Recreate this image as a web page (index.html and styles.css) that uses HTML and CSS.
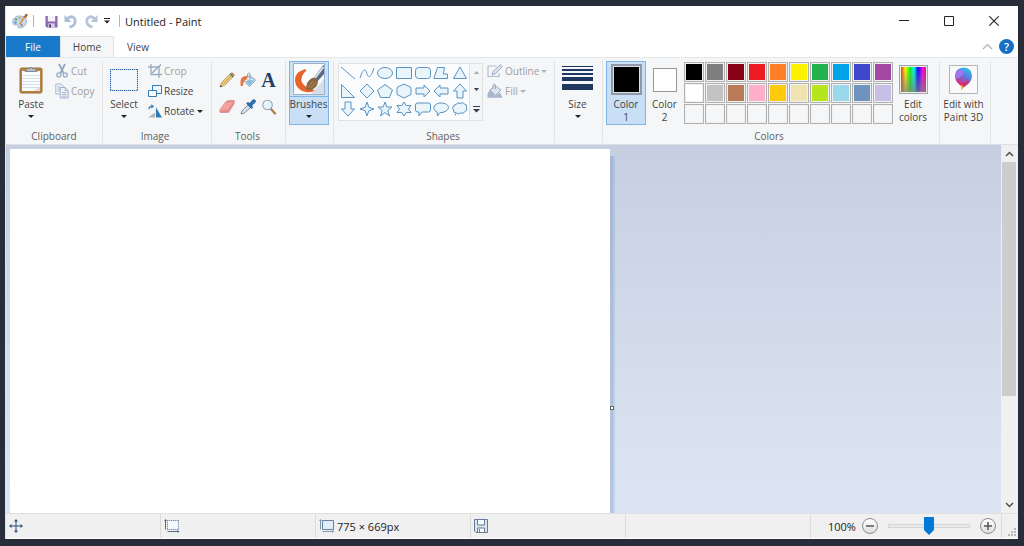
FILE: index.html
```html
<!DOCTYPE html>
<html lang="en">
<head>
<meta charset="utf-8">
<title>Untitled - Paint</title>
<link rel="stylesheet" href="styles.css">
</head>
<body>
<div class="window">
  <header class="titlebar">
    <svg class="app-icon" width="17" height="16" viewBox="0 0 17 16"><path d="M8 3C3.500 2.500.5 6 .7 9.500 1 12 3 12.500 4.500 12c1.500-.4 2 .6 1.500 1.500-.3 1.500 2 1.800 4 1 3-1 5-4 4.500-7C14 4.500 11 3.200 8 3z" fill="#c3dcf0" stroke="#8aa9c4" stroke-width=".8"/><circle cx="4" cy="6.500" r="1.200" fill="#6aa57a"/><circle cx="7.500" cy="5" r="1.200" fill="#e6a468"/><circle cx="3.500" cy="9.600" r="1.200" fill="#5b8fc4"/><circle cx="9.500" cy="12" r="1.200" fill="#d3726a"/><path d="M8 11 13 3" stroke="#d79a52" stroke-width="2"/><path d="M12 4.500 13.500.8 16 1.500 14 5z" fill="#a9652b"/></svg>
    <span class="bar"></span>
    <button class="quick save" aria-label="Save"><svg width="13" height="13" viewBox="0 0 14 14"><path d="M.5 1h13v12.500H2L.5 12z" fill="#8e68b4"/><path d="M3 1h8v6H3z" fill="#f4f1f8"/><path d="M3.500 9h7v4.500h-7z" fill="#d8cde4"/><path d="M4.500 10h2v3.500h-2z" fill="#594073"/></svg></button>
    <button class="quick undo" aria-label="Undo"><svg width="14" height="15" viewBox="0 0 14 15"><path d="M3 5C7 .8 11.500 3 11.200 7.500 11 11 8.500 12.500 5.500 13" fill="none" stroke="#aebfd6" stroke-width="2.800"/><path d="M.5 1v7h7z" fill="#aebfd6"/></svg></button>
    <button class="quick" aria-label="Redo"><svg width="14" height="15" viewBox="0 0 14 15"><path d="M11 5C7 .8 2.500 3 2.800 7.500 3 11 5.500 12.500 8.500 13" fill="none" stroke="#b6c5d8" stroke-width="2.800"/><path d="M13.500 1v7h-7z" fill="#b6c5d8"/></svg></button>
    <button class="quick custom" aria-label="Customize Quick Access Toolbar"><svg width="6" height="6" viewBox="0 0 6 6"><path d="M0 0h6v1H0zM0 2.500h6l-3 3z" fill="#222"/></svg></button>
    <span class="bar"></span>
    <h1 class="title">Untitled - Paint</h1>
    <div class="window-buttons">
      <button aria-label="Minimize"><svg width="10" height="10" viewBox="0 0 10 10"><path d="M0 4.500h10" stroke="#222"/></svg></button>
      <button aria-label="Maximize"><svg width="10" height="10" viewBox="0 0 10 10"><path d="M.5.5h9v9h-9z" fill="none" stroke="#222"/></svg></button>
      <button aria-label="Close"><svg width="10" height="10" viewBox="0 0 10 10"><path d="m.3.3 9.400 9.400m0-9.400L.3 9.700" stroke="#222" stroke-width="1.100"/></svg></button>
    </div>
  </header>

  <nav class="tabs">
    <button class="tab file">File</button>
    <button class="tab active">Home</button>
    <button class="tab">View</button>
    <button class="collapse" aria-label="Minimize the Ribbon"><svg width="11" height="7" viewBox="0 0 11 7"><path d="m1 6 4.500-4.500L10 6" fill="none" stroke="#b0b0b0" stroke-width="1.200"/></svg></button>
    <button class="help" aria-label="Help">?</button>
  </nav>

  <div class="ribbon">
    <section class="group clipboard">
      <div class="tools-row">
        <button class="big">
          <span class="pic"><svg width="26" height="30" viewBox="0 0 26 30"><rect x="2" y="3" width="22" height="25" rx="1.500" fill="#b9833e" stroke="#9a6f38"/><path d="M4 6h18v20H4z" fill="#fbfcfd"/><path d="M4 10.500h18M4 13.500h18M4 16.500h18M4 19.500h18M4 22.500h18" stroke="#d3dfe9"/><path d="m16 26 6-5v5z" fill="#d6dde5"/><path d="M7 6.500 9 3.500h2.500Q13 .5 14.500 3.500H17l2 3z" fill="#b8bfc5" stroke="#6e767d" stroke-width=".8"/></svg></span>
          <span>Paste</span><i class="caret"></i>
        </button>
        <div class="stack">
          <button class="small" disabled><svg width="14" height="16" viewBox="0 0 14 16"><path d="M4 1 8.500 10M10 1 5.500 10" stroke="#91a5c0" stroke-width="1.700"/><circle cx="3.800" cy="12" r="2" fill="none" stroke="#a3b4cc" stroke-width="1.500"/><circle cx="10.200" cy="12" r="2" fill="none" stroke="#a3b4cc" stroke-width="1.500"/></svg>Cut</button>
          <button class="small" disabled><svg width="14" height="16" viewBox="0 0 14 16"><path d="M.8 1h5.500l2.200 2.300V11H.8z" fill="#eef2f7" stroke="#aab9cd"/><path d="M2.500 4h3M2.500 6h3M2.500 8h3" stroke="#aab9cd"/><path d="M5.200 4.500h5l3 3V15h-8z" fill="#eef2f7" stroke="#9fb1c8"/><path d="M10 4.500v3h3M7 9.500h4.500M7 11.500h4.500M7 13.200h4.500" fill="none" stroke="#9fb1c8" stroke-width=".9"/></svg>Copy</button>
        </div>
      </div>
      <h2>Clipboard</h2>
    </section>

    <section class="group image">
      <div class="tools-row">
        <button class="big">
          <span class="pic"><svg width="28" height="22" viewBox="0 0 28 22"><path d="M1 1h26v20H1z" fill="#f2f7fc"/><path d="M0 .5h28M0 21.500h28M.5 0v22M27.500 0v22" stroke="#a9c3de"/><path d="M0 .5h28M0 21.500h28M.5 0v22M27.500 0v22" stroke="#2f62a0" stroke-dasharray="1 1"/></svg></span>
          <span>Select</span><i class="caret"></i>
        </button>
        <div class="stack">
          <button class="small" disabled><svg width="14" height="16" viewBox="0 0 14 16"><path d="M3 1v10.500h11M0 4h11v11" fill="none" stroke="#97aac4" stroke-width="1.300"/><path d="m4 10 9-8.500" stroke="#8fa4c0" stroke-width="1.200"/></svg>Crop</button>
          <button class="small"><svg width="14" height="16" viewBox="0 0 14 16"><path d="M4.500 2.500h9v8h-9z" fill="#eef6fc" stroke="#347ab2"/><path d="M.5 7.500h8v6h-8z" fill="#fff" stroke="#347ab2"/></svg>Resize</button>
          <button class="small"><svg width="14" height="16" viewBox="0 0 15 16"><path d="M8.500 15V4L15 15z" fill="#2a7dbd"/><path d="M0 15 7.500 9.500V15z" fill="#aeb4ba"/><path d="M1 6Q1 3 4 3" fill="none" stroke="#2c80c0" stroke-width="1.300"/><path d="M3.500.8 6.500 3l-3 2.500z" fill="#2c80c0"/></svg>Rotate<i class="caret"></i></button>
        </div>
      </div>
      <h2>Image</h2>
    </section>

    <section class="group tools">
      <div class="tool-grid">
        <button aria-label="Pencil"><svg width="16" height="16" viewBox="0 0 16 16"><path d="m1 15 1.500-4.500L12 1l3 3-9.500 9.500z" fill="#ebcd78" stroke="#a08a5c" stroke-width=".7"/><path d="m4 12 8.500-8.500" stroke="#c0a253"/><path d="m12 1 1-.7L15.700 3 15 4z" fill="#d56464"/><path d="m10.500 2.500 3 3L15 4l-3-3z" fill="#6c9462"/><path d="m1 15 .8-2 1.400 1.200z" fill="#333"/></svg></button>
        <button aria-label="Fill with color"><svg width="16" height="16" viewBox="0 0 16 16"><path d="m4 8.500 5-5L15.500 8l-6 6.500z" fill="#d3e6f3" stroke="#6f9abb" stroke-width=".9"/><path d="m6 9.500 3-1.500 5 .5-4.500 5z" fill="#8bb9d7"/><path d="M7.500 5V2Q8.500 0 10 2v5.500" fill="none" stroke="#8397a8" stroke-width=".9"/><path d="M7 4Q1 4 .5 9v4.500q1.500 1 2.500 0Q3.500 8 7 7z" fill="#e57543"/></svg></button>
        <button class="text-tool" aria-label="Text">A</button>
        <button aria-label="Eraser"><svg width="16" height="16" viewBox="0 0 16 16"><path d="M6 3.500 9 1.500h6.500L15 5l-5.500 8.500H1L.8 11z" fill="#e68b8b" stroke="#d08a88" stroke-width=".7"/><path d="M6 3.500h8L8.500 11H1z" fill="#f0a3a0"/></svg></button>
        <button aria-label="Color picker"><svg width="16" height="16" viewBox="0 0 16 16"><path d="m1 15 1-3 6-6 2.500 2.500-6 5.500z" fill="#d6e5ee" stroke="#6b8297" stroke-width=".9"/><path d="m6.500 4.500 1.300-1.200 2 1L12.500 1q2-1 3 .5.500 1-1 2.500L12 6.500l.7 2-1.200 1.200z" fill="#2b71ae" stroke="#24547c" stroke-width=".5"/></svg></button>
        <button aria-label="Magnifier"><svg width="16" height="16" viewBox="0 0 16 16"><path d="m9.500 9.500 4.500 5" stroke="#ae7941" stroke-width="2.200" stroke-linecap="round"/><circle cx="6.500" cy="6" r="4.800" fill="#e5f2fa" stroke="#93a6b7" stroke-width="1.100"/><path d="M4 5.500Q4.500 3 7 3" fill="none" stroke="#fff"/></svg></button>
      </div>
      <h2>Tools</h2>
    </section>

    <section class="group single">
      <button class="big brushes">
        <span class="pic"><svg width="32" height="32" viewBox="0 0 32 32"><path d="M.5.500h31v31H.5z" fill="#fafbfd" stroke="#9fb0c2"/><path d="M18 31 31 16v15z" fill="#d5deea"/><path d="m20 16 9.500-13L31 2v9l-7 8z" fill="#5b6b85"/><path d="m22 15 8.500-11" stroke="#dfe8f1" stroke-width="1.800"/><path d="M13 8Q14 5.500 11 6.500 1 10 2 18q1 9 11 11 6 1 9-2-6-1-10-4-7-6-1-13z" fill="#e8622b"/><path d="M13 27q0-9 6-12 4-1 6 4-1 6-7 8z" fill="#8a6642"/><path d="m15 25 5-7m-2 7 5-6" stroke="#b38b5d"/></svg></span>
        <span>Brushes</span><i class="caret"></i>
      </button>
    </section>

    <section class="group shapes">
      <div class="tools-row">
        <div class="gallery">
          <div class="shape-grid">
            <button aria-label="Line"><svg viewBox="0 0 16 16"><path d="m1 2 14 12"/></svg></button>
            <button aria-label="Curve"><svg viewBox="0 0 16 16"><path fill="none" d="M1 13C5 1 7 5 8 9s4 4 7-6"/></svg></button>
            <button aria-label="Oval"><svg viewBox="0 0 16 16"><ellipse cx="8" cy="8" rx="7.500" ry="5.500"/></svg></button>
            <button aria-label="Rectangle"><svg viewBox="0 0 16 16"><path d="M.5 2.500h15v11H.5z"/></svg></button>
            <button aria-label="Rounded rectangle"><svg viewBox="0 0 16 16"><rect x=".5" y="2.500" width="15" height="11" rx="3"/></svg></button>
            <button aria-label="Polygon"><svg viewBox="0 0 16 16"><path d="M4.500 2.500h7l-1 6.500h4v4.500H.8z"/></svg></button>
            <button aria-label="Triangle"><svg viewBox="0 0 16 16"><path d="m8 2 6.500 11.500h-13z"/></svg></button>
            <button aria-label="Right triangle"><svg viewBox="0 0 16 16"><path d="M1.500 1.500v13h13z"/></svg></button>
            <button aria-label="Diamond"><svg viewBox="0 0 16 16"><path d="m8 1 7 7-7 7-7-7z"/></svg></button>
            <button aria-label="Pentagon"><svg viewBox="0 0 16 16"><path d="m8 1.500 7.500 5.500-3 7.500h-9L.5 7z"/></svg></button>
            <button aria-label="Hexagon"><svg viewBox="0 0 16 16"><path d="m8 1 7 3.500v7L8 15l-7-3.500v-7z"/></svg></button>
            <button aria-label="Right arrow"><svg viewBox="0 0 16 16"><path d="M1 5h8V2l6 6-6 6v-3H1z"/></svg></button>
            <button aria-label="Left arrow"><svg viewBox="0 0 16 16"><path d="M15 5H7V2L1 8l6 6v-3h8z"/></svg></button>
            <button aria-label="Up arrow"><svg viewBox="0 0 16 16"><path d="M5 15V8H1.500L8 1l6.500 7H11v7z"/></svg></button>
            <button aria-label="Down arrow"><svg viewBox="0 0 16 16"><path d="M5 1v7H1.500L8 15l6.500-7H11V1z"/></svg></button>
            <button aria-label="Four-point star"><svg viewBox="0 0 16 16"><path d="m8 1 1.800 5.200L15 8 9.800 9.800 8 15 6.200 9.800 1 8l5.200-1.800z"/></svg></button>
            <button aria-label="Five-point star"><svg viewBox="0 0 16 16"><path d="m8 1 1.800 5H15l-4.200 3.500L12.500 15 8 11.500 3.500 15l1.700-5.500L1 6h5.200z"/></svg></button>
            <button aria-label="Six-point star"><svg viewBox="0 0 16 16"><path d="m8 1 2.200 3.500H15L12.500 8l2.500 3.500h-4.800L8 15l-2.200-3.500H1L3.500 8 1 4.500h4.800z"/></svg></button>
            <button aria-label="Rounded callout"><svg viewBox="0 0 16 16"><path d="M2.500 2h11q2 0 2 2v5q0 2-2 2H7l-3 4v-4H2.500q-2 0-2-2V4q0-2 2-2z"/></svg></button>
            <button aria-label="Oval callout"><svg viewBox="0 0 16 16"><path d="M4.500 15 4 11C-2 8 1 2 8 2s10 5 5 8q-3 2-6 1.500z"/></svg></button>
            <button aria-label="Cloud callout"><svg viewBox="0 0 16 16"><path d="M4 3.500Q6 .5 8 2.500q3-2 4.500.5 3 .5 2 3.500 1.500 3-1.500 4-1.500 2.500-4.500 1.500Q6 14 4.500 12 1 12 1.500 9-.5 6 2 5.500 1.500 3.500 4 3.500zM4 12.500l-1 2"/></svg></button>
          </div>
          <div class="gallery-scroll">
            <button aria-label="Scroll up"><svg width="5" height="3" viewBox="0 0 5 3"><path d="m0 3 2.500-3L5 3z" fill="#a6a6a6"/></svg></button>
            <button aria-label="Scroll down"><svg width="5" height="3" viewBox="0 0 5 3"><path d="m0 0 2.500 3L5 0z" fill="#333f50"/></svg></button>
            <button aria-label="More shapes"><svg width="7" height="7" viewBox="0 0 7 7"><path d="M0 0h7v1H0zM0 3h7L3.500 6.500z" fill="#333f50"/></svg></button>
          </div>
        </div>
        <div class="stack">
          <button class="small" disabled><svg width="16" height="16" viewBox="0 0 16 16"><path d="M9.500 3H1v10.500h11V10" fill="none" stroke="#b3bfd0" stroke-width="1.200"/><path d="m5 12 1-3.500 7.500-7L15.500 3.500 8 11z" fill="#dae2ec" stroke="#9caec5"/></svg>Outline<i class="caret"></i></button>
          <button class="small" disabled><svg width="16" height="16" viewBox="0 0 16 16"><path d="M.5 14.800V11L3 6.500 6 9l2 4 5-3.500 2.500 5.300z" fill="#a9b9cd"/><path d="m3 7 5-4.500L14 7l-5.500 5.500z" fill="#dce4ed" stroke="#9aadc4"/><path d="M6 6V2Q7-.5 8.500 2v4" fill="none" stroke="#9aadc4"/></svg>Fill<i class="caret"></i></button>
        </div>
      </div>
      <h2>Shapes</h2>
    </section>

    <section class="group single">
      <button class="big size">
        <span class="pic"><svg width="31" height="32" viewBox="0 0 31 32"><path d="M0 2h31v1H0zM0 5h31v2H0zM0 9h31v2H0zM0 13h31v4H0zM0 20h31v6H0z" fill="#1e3860"/></svg></span>
        <span>Size</span><i class="caret"></i>
      </button>
    </section>

    <section class="group colors">
      <div class="tools-row">
        <button class="big color selected"><span class="pic"><i class="chip primary"></i></span><span>Color<br>1</span></button>
        <button class="big color"><span class="pic"><i class="chip"></i></span><span>Color<br>2</span></button>
        <div class="palette">
          <button class="black" aria-label="Black"></button><button class="gray" aria-label="Gray"></button><button class="dark-red" aria-label="Dark red"></button><button class="red" aria-label="Red"></button><button class="orange" aria-label="Orange"></button><button class="yellow" aria-label="Yellow"></button><button class="green" aria-label="Green"></button><button class="turquoise" aria-label="Turquoise"></button><button class="indigo" aria-label="Indigo"></button><button class="purple" aria-label="Purple"></button>
          <button class="white" aria-label="White"></button><button class="light-gray" aria-label="Light gray"></button><button class="brown" aria-label="Brown"></button><button class="rose" aria-label="Rose"></button><button class="gold" aria-label="Gold"></button><button class="light-yellow" aria-label="Light yellow"></button><button class="lime" aria-label="Lime"></button><button class="light-turquoise" aria-label="Light turquoise"></button><button class="blue-gray" aria-label="Blue gray"></button><button class="lavender" aria-label="Lavender"></button>
          <button aria-label="Custom color 1"></button><button aria-label="Custom color 2"></button><button aria-label="Custom color 3"></button><button aria-label="Custom color 4"></button><button aria-label="Custom color 5"></button><button aria-label="Custom color 6"></button><button aria-label="Custom color 7"></button><button aria-label="Custom color 8"></button><button aria-label="Custom color 9"></button><button aria-label="Custom color 10"></button>
        </div>
        <button class="big edit"><span class="pic"><i class="spectrum"></i></span><span>Edit<br>colors</span></button>
      </div>
      <h2>Colors</h2>
    </section>

    <section class="group single">
      <button class="big paint3d">
        <span class="pic"><svg width="29" height="29" viewBox="0 0 29 29"><defs><linearGradient id="drop" x1=".7" y1="0" x2=".3" y2="1"><stop offset="0" stop-color="#28c5ee"/><stop offset=".4" stop-color="#6471dc"/><stop offset=".7" stop-color="#d3358d"/><stop offset="1" stop-color="#f5a623"/></linearGradient></defs><path d="M.5.500h28v28H.5z" fill="#fafafa" stroke="#b5b5b5"/><path d="M12 26q2-4-2-7-4-3-4-8 0-8 9-8.500 8 .5 8 8.500-.5 6-5 9-4 2-6 6z" fill="url(#drop)"/><path d="M6.500 10q1-5 6-5 4 2 1 5t-7 4z" fill="#a477ee"/><path d="M9 18q6 1 11-3-2 7-7 7z" fill="#d52c70"/><path d="M12 26q2-4-1-6 4 0 3 3z" fill="#f3b33c"/></svg></span>
        <span>Edit with<br>Paint 3D</span>
      </button>
    </section>
  </div>

  <main class="workspace">
    <div class="desk">
      <div class="paper"><span class="handle"></span></div>
    </div>
    <div class="scrollbar">
      <button aria-label="Scroll up"><svg width="9" height="6" viewBox="0 0 9 6"><path d="m1 5 3.500-3.500L8 5" fill="none" stroke="#505050" stroke-width="1.500"/></svg></button>
      <div class="track"><div class="thumb"></div></div>
      <button aria-label="Scroll down"><svg width="9" height="6" viewBox="0 0 9 6"><path d="m1 1 3.500 3.500L8 1" fill="none" stroke="#505050" stroke-width="1.500"/></svg></button>
    </div>
  </main>

  <footer class="status">
    <div class="cell"><svg width="14" height="14" viewBox="0 0 14 14"><path d="M7 1v12M1 7h12" stroke="#2f4c78"/><path d="m7 0 2 2.500H5zM7 14l2-2.500H5zM0 7l2.500-2v4zM14 7l-2.500-2v4z" fill="#2f4c78"/></svg></div>
    <div class="cell"><svg width="16" height="14" viewBox="0 0 16 14"><path d="M3 1h12v10H3z" fill="#f4f8fc"/><path d="M3 1.500h12M3 10.500h12M3.500 1v10M14.500 1v10" stroke="#c3cddb"/><path d="M3 1.500h12M3 10.500h12M3.500 1v10M14.500 1v10" stroke="#8294ae" stroke-dasharray="1 1"/><path d="M1.500 1v9.500M3.500 12.500h11" stroke="#52698c"/><path d="m1.500 0 1.500 2H0zM15.500 12.500l-2-1.500v3z" fill="#52698c"/></svg></div>
    <div class="cell"><svg width="16" height="14" viewBox="0 0 16 14"><path d="M3.500 1.500h11v9h-11z" fill="#dfeef6" stroke="#667f9d"/><path d="M1.500 1v9.500M3.500 12.500h11" stroke="#8497b0"/><path d="m1.500 0 1.500 2H0zM15.500 12.500l-2-1.500v3z" fill="#8497b0"/></svg><span>775 × 669px</span></div>
    <div class="cell"><svg width="14" height="14" viewBox="0 0 14 14"><path d="M.5.500h13v13H2L.5 12z" fill="#dce6f0" stroke="#647b99"/><path d="M3.500 1v5h7V1M3.500 13V9h7v4M5.500 10v3" fill="#fafcfd" stroke="#647b99"/></svg></div>
    <div class="cell spacer"></div>
    <div class="zoom">
      <label for="zoom">100%</label>
      <button class="round" aria-label="Zoom out"><svg width="8" height="8" viewBox="0 0 8 8"><path d="M0 4h8" stroke="#555" stroke-width="1.500"/></svg></button>
      <input id="zoom" type="range" min="0" max="100" value="50">
      <button class="round" aria-label="Zoom in"><svg width="8" height="8" viewBox="0 0 8 8"><path d="M0 4h8M4 0v8" stroke="#555" stroke-width="1.500"/></svg></button>
    </div>
    <div class="grip"><svg width="10" height="10" viewBox="0 0 10 10"><path d="M7 0h2v2H7zM4 3h2v2H4zM7 3h2v2H7zM1 6h2v2H1zM4 6h2v2H4zM7 6h2v2H7z" fill="#b8b8b8"/></svg></div>
  </footer>
</div>
</body>
</html>
```
FILE: styles.css
```css
* { box-sizing: border-box; }

body {
  margin: 0;
  height: 100vh;
  padding: 6px 6px 7px 5px;
  background: #282d3a;
  color: #444;
  font: 10px/13px "Open Sans", "Noto Sans", sans-serif;
}

button {
  margin: 0;
  padding: 0;
  border: 0;
  background: none;
  color: inherit;
  font: inherit;
}

svg { display: block; flex: none; }

.window {
  display: flex;
  flex-direction: column;
  height: 100%;
  background: #fff;
  border-left: 1px solid #dfe3e8;
}

/* Title bar */
.titlebar {
  display: flex;
  align-items: center;
  flex: none;
  height: 30px;
  padding-left: 6px;
}
.bar { width: 1px; height: 12px; background: #b4b4b4; margin-left: 4px; }
.quick { margin-left: 6px; }
.quick.save { margin-left: 11px; }
.quick.custom { margin: 0 5px 0 6px; }
.title { margin: 0 0 0 5px; font-size: 11px; font-weight: 400; color: #222; }
.window-buttons { display: flex; margin-left: auto; padding-right: 2px; align-self: stretch; }
.window-buttons button { width: 45px; display: grid; place-items: center; }

/* Tabs */
.tabs { display: flex; align-items: center; flex: none; height: 21px; }
.tab { width: 48px; height: 100%; border: 1px solid transparent; border-bottom: 0; }
.tab.file { width: 54px; background: #1979ca; color: #fff; }
.tab.active { width: 54px; background: #f5f6f7; border-color: #dfe1e4; }
.collapse { margin-left: auto; }
.help {
  width: 15px;
  height: 15px;
  margin: 0 4px 0 6px;
  border-radius: 50%;
  background: #1570c5;
  color: #fff;
  font-size: 11px;
  font-weight: 600;
}

/* Ribbon */
.ribbon {
  display: flex;
  flex: none;
  height: 88px;
  padding: 3px 0 1px;
  background: #f5f6f7;
  border-top: 1px solid #e4e6e8;
  border-bottom: 1px solid #dcdfe4;
}
.group {
  display: flex;
  flex-direction: column;
  flex: none;
  border-right: 1px solid #e2e4e6;
}
.group h2 {
  margin: auto 0 0;
  font-size: 10px;
  font-weight: 400;
  text-align: center;
  color: #5f5f5f;
}
.tools-row { display: flex; }
.clipboard { width: 97px; }
.image { width: 109px; }
.image h2, .colors h2 { padding-right: 4px; }
.tools { width: 74px; }
.tools h2, .shapes h2 { padding-right: 2px; }
.single { width: 48px; align-items: center; padding-right: 2px; }
.single:last-child { width: 51px; padding-right: 3px; }
.shapes { width: 221px; }
.colors { width: 337px; }
.colors .tools-row { padding-left: 3px; }

.big {
  display: flex;
  flex-direction: column;
  align-items: center;
  flex: none;
  width: 40px;
  height: 64px;
  border: 1px solid transparent;
  white-space: nowrap;
}
.big .pic {
  display: grid;
  place-items: center;
  height: 35px;
  margin-bottom: 1px;
  width: 100%;
}
.clipboard .big { margin-left: 5px; }
.image .big { margin-left: 1px; }
.big .caret { margin-top: 4px; }
.caret {
  width: 0;
  height: 0;
  border: 3px solid transparent;
  border-top-color: #222;
  border-bottom: 0;
}

.stack { display: flex; flex-direction: column; padding-left: 4px; }
.small {
  display: flex;
  align-items: center;
  gap: 2px;
  height: 20px;
}
.small:disabled { color: #a0a0a0; }
.small:disabled .caret { border-top-color: #adb3ba; }

.tool-grid {
  display: grid;
  grid-template-columns: repeat(3, 21px);
  grid-auto-rows: 27px;
  padding: 5px 0 0 4px;
}
.tool-grid button { display: grid; place-items: center; }
.text-tool { color: #243d63; font: 700 20px/20px "Liberation Serif", serif; }

.brushes { background: #c9dff6; border-color: #7eb4ea; }
.brushes .pic { border-bottom: 1px solid #7eb4ea; }

/* Shape gallery */
.gallery {
  display: flex;
  margin: 2px 0 0 4px;
  width: 145px;
  height: 58px;
  border: 1px solid #dfe2e5;
  background: #fbfcfe;
}
.shape-grid {
  flex: 1;
  display: grid;
  grid-template-columns: repeat(7, 1fr);
  grid-template-rows: repeat(3, 18px);
}
.shape-grid button { display: grid; place-items: center; }
.shape-grid svg { width: 16px; height: 16px; fill: #e9f4fb; stroke: #5a92c0; stroke-width: 1; }
.gallery-scroll {
  display: grid;
  width: 13px;
  border-left: 1px solid #dfe2e5;
  background: #f5f6f7;
}
.gallery-scroll button { display: grid; place-items: center; }

/* Colors */
.selected { background: #c9dff6; border-color: #7eb4ea; }
.chip { width: 24px; height: 24px; background: #fff; border: 1px solid #979797; }
.chip.primary {
  width: 31px;
  height: 31px;
  background: #000;
  border: 2px solid #8f9aa6;
  box-shadow: inset 0 0 0 1px #d8e2ec;
}
.color + .color { width: 37px; }
.palette {
  display: grid;
  grid-template-columns: repeat(10, 20px);
  grid-auto-rows: 20px;
  gap: 1px;
  margin-left: 1px;
  padding-top: 1px;
}
.palette button { border: 1px solid #b0b0b0; box-shadow: inset 0 0 0 1px #f1f1f1; }
.palette .black { background: #000; }
.palette .gray { background: #7f7f7f; }
.palette .dark-red { background: #880015; }
.palette .red { background: #ed1c24; }
.palette .orange { background: #ff7f27; }
.palette .yellow { background: #fff200; }
.palette .green { background: #22b14c; }
.palette .turquoise { background: #00a2e8; }
.palette .indigo { background: #3f48cc; }
.palette .purple { background: #a349a4; }
.palette .white { background: #fff; }
.palette .light-gray { background: #c3c3c3; }
.palette .brown { background: #b97a57; }
.palette .rose { background: #ffaec9; }
.palette .gold { background: #ffc90e; }
.palette .light-yellow { background: #efe4b0; }
.palette .lime { background: #b5e61d; }
.palette .light-turquoise { background: #99d9ea; }
.palette .blue-gray { background: #7092be; }
.palette .lavender { background: #c8bfe7; }
.spectrum {
  width: 29px;
  height: 29px;
  border: 1px solid #a5a5a5;
  box-shadow: inset 0 0 0 1px #eee;
  background:
    linear-gradient(transparent, #808080cc),
    linear-gradient(90deg, red, #ff0 20%, #0f0 38%, #0ff 52%, #00f 66%, #f0f 84%, red);
}

/* Workspace */
.workspace { display: flex; flex: 1; min-height: 0; }
.desk {
  flex: 1;
  min-width: 0;
  overflow: hidden;
  padding: 4px 0 0 4px;
  background: linear-gradient(#c5cfe1, #dce6f3);
}
.paper {
  position: relative;
  width: 600px;
  height: 519px;
  background: #fff;
  box-shadow: 3px 7px 0 #7896c333, 5px 7px 0 #7896c340;
}
.handle {
  position: absolute;
  left: 100%;
  top: calc(50% - 3px);
  width: 4px;
  height: 4px;
  border: 1px solid #666;
  background: #fff;
}
.scrollbar {
  display: flex;
  flex-direction: column;
  flex: none;
  width: 17px;
  background: #f0f0f0;
}
.scrollbar button { display: grid; place-items: center; height: 17px; }
.track { flex: 1; padding: 0 2px 0 1px; }
.thumb { height: 70%; background: #cdcdcd; }

/* Status bar */
.status {
  display: flex;
  flex: none;
  height: 26px;
  background: #f0f0f0;
  border-top: 1px solid #e0e0e0;
  border-bottom: 1px solid #fff;
  color: #222;
  font-size: 11px;
}
.cell {
  display: flex;
  align-items: center;
  gap: 2px;
  width: 155px;
  padding-left: 3px;
  border-right: 1px solid #dcdcdc;
}
.cell.spacer { flex: 1; }
.zoom {
  display: flex;
  align-items: center;
  width: 191px;
  padding-left: 17px;
  border-right: 1px solid #dcdcdc;
}
.round {
  display: grid;
  place-items: center;
  flex: none;
  width: 16px;
  height: 16px;
  border: 1px solid #8c8c8c;
  border-radius: 50%;
  background: linear-gradient(#fff, #dedede);
}
.zoom label { margin-right: 6px; }
.zoom input {
  appearance: none;
  width: 82px;
  height: 20px;
  margin: 0 10px;
  background: none;
}
.zoom input::-webkit-slider-runnable-track {
  height: 4px;
  border: 1px solid #d6d6d6;
  background: #e7e9ea;
}
.zoom input::-webkit-slider-thumb {
  appearance: none;
  width: 10px;
  height: 18px;
  margin-top: -8px;
  background: #0078d7;
  clip-path: polygon(0 0, 100% 0, 100% 72%, 50% 100%, 0 72%);
}
.grip { display: flex; align-items: flex-end; justify-content: flex-end; width: 16px; padding-right: 1px; }
```
